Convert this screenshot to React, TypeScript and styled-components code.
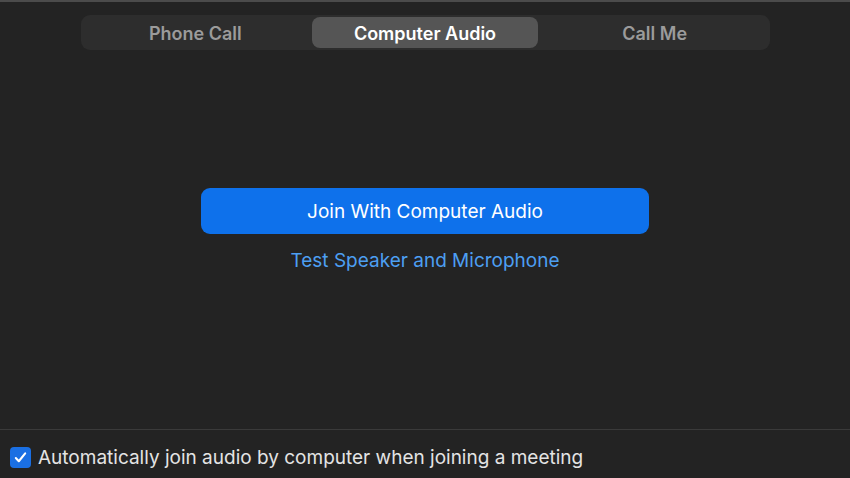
import styled, { createGlobalStyle } from 'styled-components';

const GlobalStyle = createGlobalStyle`
  html, body {
    margin: 0;
    padding: 0;
    background: #232323;
  }
  * {
    box-sizing: border-box;
  }
`;

const Window = styled.div`
  width: 850px;
  height: 478px;
  display: flex;
  flex-direction: column;
  background: #232323;
  border-top: 2px solid #4b4b4b;
  font-family: Inter, 'Liberation Sans', sans-serif;
  overflow: hidden;
`;

const TabsRow = styled.div`
  display: flex;
  justify-content: center;
  padding-top: 13px;
`;

const Tabs = styled.div`
  width: 689px;
  height: 35px;
  display: grid;
  grid-template-columns: 1fr 1fr 1fr;
  gap: 4px;
  padding: 2px;
  background: #2d2d2d;
  border-radius: 9px;
`;

const Tab = styled.button<{ $active?: boolean }>`
  border: none;
  border-radius: 8px;
  background: ${(p) => (p.$active ? '#555555' : 'transparent')};
  color: ${(p) => (p.$active ? '#ffffff' : '#9b9b9b')};
  font-family: inherit;
  font-size: 18px;
  font-weight: 600;
  cursor: pointer;
  padding: 1px 0 0;
`;

const Main = styled.div`
  flex: 1;
  display: flex;
  flex-direction: column;
  align-items: center;
  padding-top: 138px;
`;

const JoinButton = styled.button`
  width: 448px;
  height: 46px;
  border: none;
  border-radius: 9px;
  background: #0e71eb;
  color: #ffffff;
  font-family: inherit;
  font-size: 19px;
  font-weight: 400;
  cursor: pointer;
`;

const TestLink = styled.a`
  margin-top: 14px;
  color: #4d9ff2;
  font-size: 19px;
  cursor: pointer;
  line-height: 26px;
`;

const Footer = styled.label`
  height: 49px;
  display: flex;
  align-items: center;
  gap: 7px;
  padding: 6px 10px 0;
  border-top: 1px solid #3a3a3a;
  color: #e4e4e4;
  font-size: 19px;
  cursor: pointer;
`;

const CheckBox = styled.span`
  width: 21px;
  height: 21px;
  border-radius: 4px;
  background: #1a6fe3;
  display: flex;
  align-items: center;
  justify-content: center;
`;

export default function App() {
  return (
    <>
      <GlobalStyle />
      <Window>
        <TabsRow>
          <Tabs>
            <Tab>Phone Call</Tab>
            <Tab $active>Computer Audio</Tab>
            <Tab>Call Me</Tab>
          </Tabs>
        </TabsRow>
        <Main>
          <JoinButton>Join With Computer Audio</JoinButton>
          <TestLink>Test Speaker and Microphone</TestLink>
        </Main>
        <Footer>
          <CheckBox>
            <svg width="15" height="15" viewBox="0 0 16 16" fill="none">
              <path d="M3 8.5l3.2 3.5L13 3.5" stroke="#ffffff" strokeWidth="2.2" strokeLinecap="round" strokeLinejoin="round" />
            </svg>
          </CheckBox>
          Automatically join audio by computer when joining a meeting
        </Footer>
      </Window>
    </>
  );
}
